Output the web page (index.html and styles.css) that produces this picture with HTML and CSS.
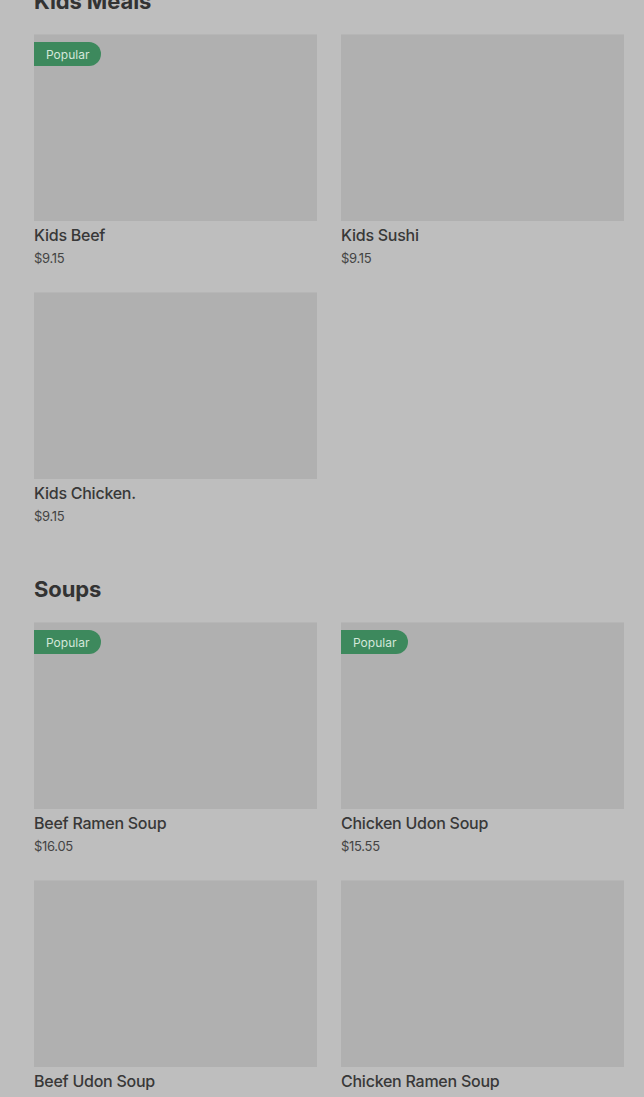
FILE: index.html
```html
<!DOCTYPE html>
<html lang="en">
<head>
<meta charset="utf-8">
<title>Menu</title>
<link rel="stylesheet" href="styles.css">
</head>
<body>
<main class="menu">
  <section class="section section-first">
    <h2 class="section-title">Kids Meals</h2>
    <div class="grid">
      <div class="card">
        <div class="thumb"><span class="badge">Popular</span></div>
        <div class="name">Kids Beef</div>
        <div class="price">$9.15</div>
      </div>
      <div class="card">
        <div class="thumb"></div>
        <div class="name">Kids Sushi</div>
        <div class="price">$9.15</div>
      </div>
      <div class="card">
        <div class="thumb"></div>
        <div class="name">Kids Chicken.</div>
        <div class="price">$9.15</div>
      </div>
    </div>
  </section>
  <section class="section">
    <h2 class="section-title">Soups</h2>
    <div class="grid">
      <div class="card">
        <div class="thumb"><span class="badge">Popular</span></div>
        <div class="name">Beef Ramen Soup</div>
        <div class="price">$16.05</div>
      </div>
      <div class="card">
        <div class="thumb"><span class="badge">Popular</span></div>
        <div class="name">Chicken Udon Soup</div>
        <div class="price">$15.55</div>
      </div>
      <div class="card">
        <div class="thumb"></div>
        <div class="name">Beef Udon Soup</div>
        <div class="price">$16.05</div>
      </div>
      <div class="card">
        <div class="thumb"></div>
        <div class="name">Chicken Ramen Soup</div>
        <div class="price">$15.55</div>
      </div>
    </div>
  </section>
</main>
</body>
</html>
```

FILE: styles.css
```css
html, body {
  margin: 0;
  padding: 0;
  background: #bebebe;
  overflow: hidden;
}

body {
  font-family: Inter, "Noto Sans", "Liberation Sans", sans-serif;
  color: #363636;
}

.menu {
  padding: 0 20px 0 34px;
}

.section {
  margin-bottom: 50px;
}

.section-first {
  margin-top: -13px;
}

.section-title {
  margin: 0 0 19px;
  font-size: 22px;
  line-height: 28px;
  font-weight: 700;
  letter-spacing: -0.1px;
  color: #333333;
}

.grid {
  display: grid;
  grid-template-columns: 283px 283px;
  column-gap: 24px;
  row-gap: 25px;
}

.card {
  display: flex;
  flex-direction: column;
}

.thumb {
  position: relative;
  height: 187px;
  background: #b0b0b0;
  border-top: 1px solid #b6b6b6;
  box-sizing: border-box;
}

.badge {
  position: absolute;
  left: 0;
  top: 7px;
  height: 24px;
  padding: 0 12px;
  display: flex;
  align-items: center;
  background: #3d895d;
  color: #d4e7da;
  font-size: 12px;
  border-radius: 0 12px 12px 0;
}

.name {
  margin-top: 4px;
  font-size: 16px;
  line-height: 20px;
  font-weight: 500;
  letter-spacing: -0.25px;
  color: #383838;
}

.price {
  margin-top: 4px;
  font-size: 13px;
  line-height: 18px;
  color: #444444;
  letter-spacing: -0.3px;
}
```
